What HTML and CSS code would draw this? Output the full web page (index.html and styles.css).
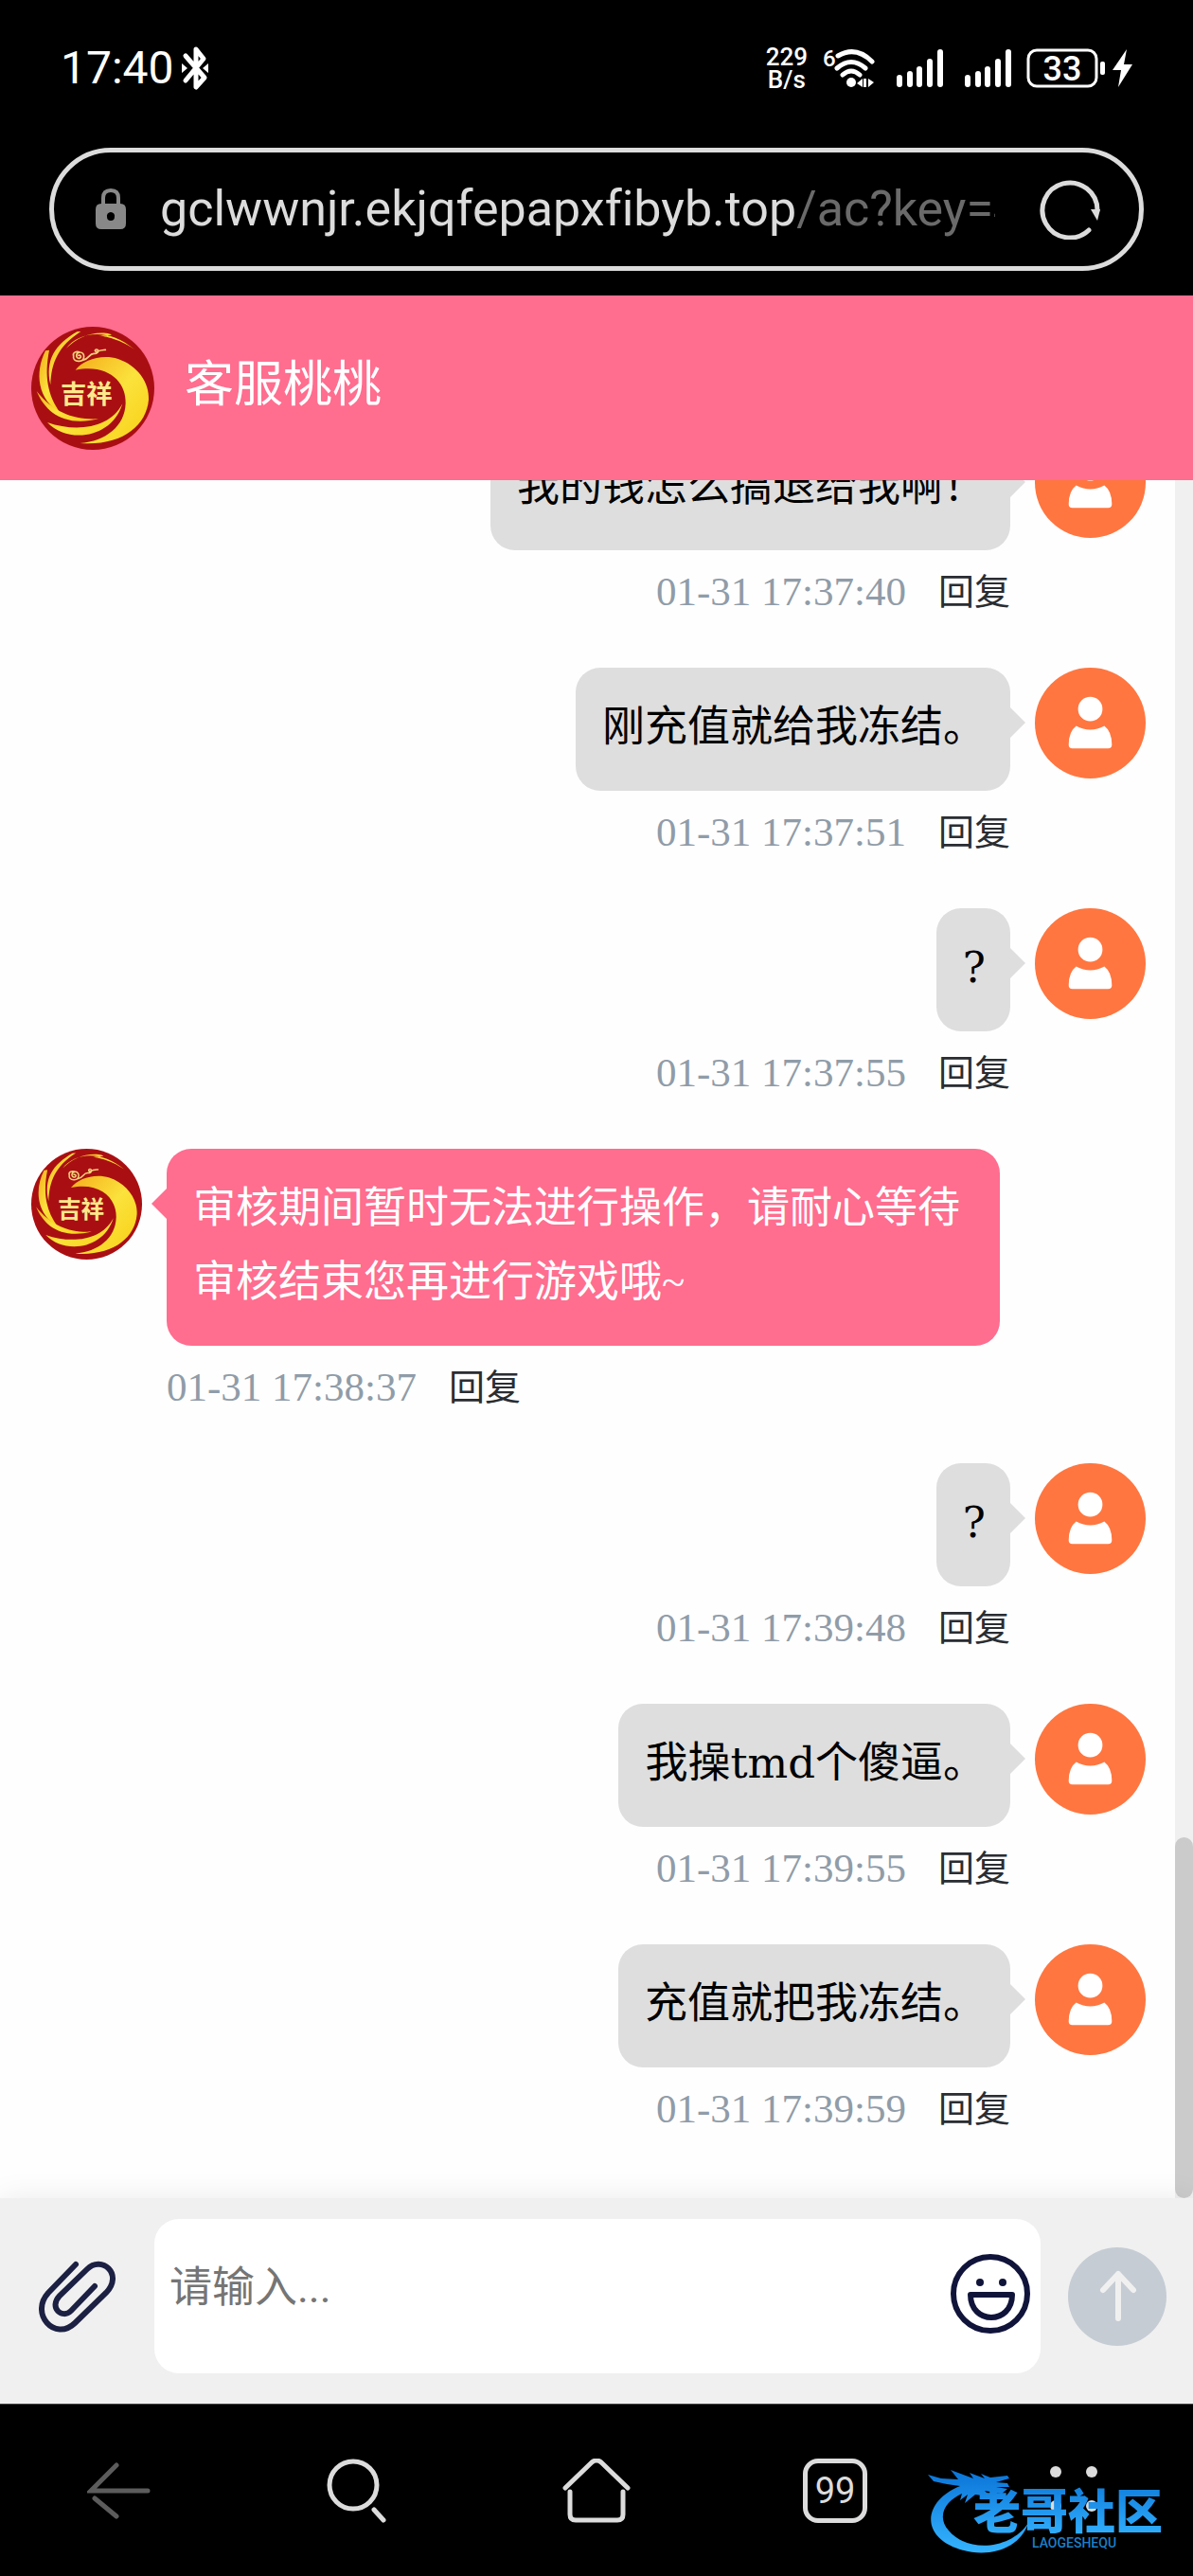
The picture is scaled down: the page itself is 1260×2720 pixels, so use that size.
FILE: index.html
```
<!DOCTYPE html>
<html lang="zh-CN">

<head>
    <meta charset="UTF-8">
    <meta name="viewport" content="width=device-width, initial-scale=1.0">
    <title>客服桃桃</title>
    <link rel="stylesheet" href="styles.css">
</head>

<body>

    <!-- Shared icons -->
    <svg class="sprite" aria-hidden="true">
        <symbol id="logo" viewBox="15 14 390 390">
            <defs>
                <linearGradient id="gold" x1="0" y1="0" x2="1" y2="1">
                    <stop offset="0" stop-color="#f5ad1c" />
                    <stop offset="0.5" stop-color="#fbe23c" />
                    <stop offset="1" stop-color="#f8cf14" />
                </linearGradient>
            </defs>
            <circle cx="210" cy="209" r="195" fill="#a90f12" />
            <g fill="url(#gold)">
                <path d="M155 151C180 118 240 100 290 116C350 136 390 190 387 245C380 330 300 392 170 383C250 376 312 330 314 256C316 190 260 130 155 151Z" />
                <path d="M160 30C90 70 58 120 76 198C78 130 100 75 172 29Z" />
                <path d="M60 90C25 160 35 245 108 288C66 230 56 170 72 88Z" />
                <path d="M126 82C165 30 260 15 342 86C290 48 235 44 232 42C265 42 285 40 252 34C200 30 160 50 126 82Z" />
                <path d="M32 218C60 285 120 332 228 306C150 310 85 285 32 218Z" />
                <path d="M66 317C130 385 270 370 304 258C265 335 160 350 66 317Z" />
            </g>
            <g fill="none" stroke="#f6d27c" stroke-width="5" stroke-linecap="round">
                <path d="M165 105c8-3 10 8 2 9c-12 1-12-18 2-19c17-1 18 27-2 28c-15 1-20-8-18-16c-4-12 10-17 20-12M178 120c20-2 20-22 36-21c16 1 16-14 7-13c-8 2-2 10 5 6c6-4 14-4 24-5" />
            </g>
            <text x="108" y="258" font-size="82" font-weight="700" fill="#ffe88a" class="logo-text">吉祥</text>
        </symbol>
        <symbol id="user" viewBox="0 0 118 118">
            <circle cx="59" cy="59" r="59" fill="#ff7640" />
            <circle cx="59" cy="44" r="13" fill="#fff" />
            <path d="M44 62Q59 70 74 62Q82 68 82 82Q82 86 78 86H40Q36 86 36 82Q36 68 44 62Z" fill="#fff" />
        </symbol>
        <symbol id="signal" viewBox="0 0 56 42">
            <g stroke="#fff" stroke-width="6" stroke-linecap="round">
                <path d="M10 31v7M21 27v11M31 22v16M42 14v24M53 4v34" />
            </g>
        </symbol>
    </svg>

    <header class="browser-top">
        <div class="status-bar">
            <div class="status-left">
                <span class="clock">17:40</span>
                <svg width="28" height="48" viewBox="0 0 28 48">
                    <g fill="none" stroke="#fff" stroke-width="5" stroke-linejoin="round" stroke-linecap="round">
                        <path d="M4 11L24 34L15 44V4L23 14L4 37" />
                    </g>
                    <path d="M0 19l6 5l-6 5zM28 19l-6 5l6 5z" fill="#fff" />
                </svg>
            </div>
            <div class="status-right">
                <div class="speed">229<br>B/s</div>
                <svg width="55" height="42" viewBox="0 0 55 42">
                    <text x="0" y="19" font-size="24" fill="#fff" class="ui-text">6</text>
                    <g fill="none" stroke="#fff" stroke-width="5" stroke-linecap="round">
                        <path d="M16 8Q35-3 52 14M15 21Q30 8 45 21M21 28Q30 20 39 28" />
                    </g>
                    <circle cx="30" cy="36" r="5" fill="#fff" />
                    <path d="M42 32v9l-6-4zM46 32v9h-3v-9zM48 32l6 4l-6 5z" fill="#fff" />
                </svg>
                <svg width="56" height="42"><use href="#signal" /></svg>
                <svg width="56" height="42"><use href="#signal" /></svg>
                <svg width="112" height="42" viewBox="0 0 112 42">
                    <rect x="2" y="2" width="72" height="38" rx="9" fill="none" stroke="#fff" stroke-width="3" />
                    <rect x="78" y="14" width="5" height="14" rx="2" fill="#fff" />
                    <text x="38" y="34" font-size="36" fill="#fff" text-anchor="middle" class="ui-text">33</text>
                    <path d="M106 1L91 23H100L97 41L112 17H103Z" fill="#fff" />
                </svg>
            </div>
        </div>

        <div class="address-bar">
            <svg width="32" height="44" viewBox="0 0 32 44">
                <path d="M8 18V10Q8 2 16 2T24 10V18" fill="none" stroke="#888" stroke-width="4" />
                <path fill-rule="evenodd" d="M6 16H26Q32 16 32 22V37Q32 43 26 43H6Q0 43 0 37V22Q0 16 6 16ZM16 25a4 4 0 0 0-4 5a4 4 0 0 0 8 0a4 4 0 0 0-4-5Z" fill="#888" />
            </svg>
            <div class="url"><span class="domain">gclwwnjr.ekjqfepapxfibyb.top</span>/ac?key=4</div>
            <button class="icon-btn" type="button" aria-label="刷新">
                <svg width="64" height="64" viewBox="0 0 64 64">
                    <path d="M52 54A29 29 0 1 1 61 33" fill="none" stroke="#dcdcdc" stroke-width="5" stroke-linecap="round" />
                    <path d="M54 32H64L61 44Z" fill="#dcdcdc" />
                </svg>
            </button>
        </div>
    </header>

    <div class="chat-header">
        <svg class="header-avatar"><use href="#logo" /></svg>
        <h1>客服桃桃</h1>
    </div>

    <main class="chat">
        <div class="messages">
            <div class="message user">
                <svg class="avatar"><use href="#user" /></svg>
                <div class="content">
                    <p class="bubble">我的钱怎么搞退给我啊！</p>
                    <div class="meta"><time>01-31 17:37:40</time><button type="button">回复</button></div>
                </div>
            </div>

            <div class="message user">
                <svg class="avatar"><use href="#user" /></svg>
                <div class="content">
                    <p class="bubble">刚充值就给我冻结。</p>
                    <div class="meta"><time>01-31 17:37:51</time><button type="button">回复</button></div>
                </div>
            </div>

            <div class="message user">
                <svg class="avatar"><use href="#user" /></svg>
                <div class="content">
                    <p class="bubble">?</p>
                    <div class="meta"><time>01-31 17:37:55</time><button type="button">回复</button></div>
                </div>
            </div>

            <div class="message agent">
                <svg class="avatar"><use href="#logo" /></svg>
                <div class="content">
                    <p class="bubble">审核期间暂时无法进行操作，请耐心等待审核结束您再进行游戏哦~</p>
                    <div class="meta"><time>01-31 17:38:37</time><button type="button">回复</button></div>
                </div>
            </div>

            <div class="message user">
                <svg class="avatar"><use href="#user" /></svg>
                <div class="content">
                    <p class="bubble">?</p>
                    <div class="meta"><time>01-31 17:39:48</time><button type="button">回复</button></div>
                </div>
            </div>

            <div class="message user">
                <svg class="avatar"><use href="#user" /></svg>
                <div class="content">
                    <p class="bubble">我操tmd个傻逼。</p>
                    <div class="meta"><time>01-31 17:39:55</time><button type="button">回复</button></div>
                </div>
            </div>

            <div class="message user">
                <svg class="avatar"><use href="#user" /></svg>
                <div class="content">
                    <p class="bubble">充值就把我冻结。</p>
                    <div class="meta"><time>01-31 17:39:59</time><button type="button">回复</button></div>
                </div>
            </div>
        </div>
        <div class="scrollbar"><div class="thumb"></div></div>
    </main>

    <form class="composer">
        <button class="icon-btn" type="button" aria-label="附件">
            <svg width="82" height="76" viewBox="0 0 82 76">
                <path d="M39 4L10 34C-10 56 17 86 38 66L71 34C90 14 66-6 51 9L22 37C10 50 25 62 34 53L59 27" fill="none" stroke="#1c2143" stroke-width="6" stroke-linecap="round" />
            </svg>
        </button>
        <div class="input-box">
            <textarea rows="1" placeholder="请输入..." aria-label="请输入"></textarea>
            <button class="icon-btn" type="button" aria-label="表情">
                <svg width="84" height="84" viewBox="0 0 84 84">
                    <g fill="none" stroke="#11143a" stroke-width="6" stroke-linejoin="round">
                        <circle cx="42" cy="42" r="39" />
                        <path d="M21 43H65C65 75 21 75 21 43Z" />
                    </g>
                    <circle cx="31" cy="30" r="4" fill="#11143a" />
                    <circle cx="55" cy="30" r="4" fill="#11143a" />
                </svg>
            </button>
        </div>
        <button class="icon-btn" type="submit" aria-label="发送">
            <svg width="104" height="104" viewBox="0 0 104 104">
                <circle cx="52" cy="52" r="52" fill="#c5ccd4" />
                <path d="M53 75V28M37 45L53 28L69 45" fill="none" stroke="#f0f0f0" stroke-width="6" stroke-linecap="round" stroke-linejoin="round" />
            </svg>
        </button>
    </form>

    <nav class="browser-nav">
        <button class="icon-btn" type="button" aria-label="后退">
            <svg width="68" height="68" viewBox="0 0 68 68" fill="none" stroke="#5c5c5c" stroke-width="5" stroke-linecap="round">
                <path d="M64 34H4L31 7M8 42L31 61" />
            </svg>
        </button>
        <button class="icon-btn" type="button" aria-label="搜索">
            <svg width="68" height="68" viewBox="0 0 68 68" fill="none" stroke="#dcdcdc" stroke-width="5" stroke-linecap="round">
                <circle cx="29" cy="28" r="25" />
                <path d="M51 54L61 65" />
            </svg>
        </button>
        <button class="icon-btn" type="button" aria-label="主页">
            <svg width="72" height="68" viewBox="0 0 72 68" fill="none" stroke="#dcdcdc" stroke-width="5" stroke-linecap="round" stroke-linejoin="round">
                <path d="M3 31L31 4Q36 0 41 4L69 31M8 35V59Q8 65 14 65H58Q64 65 64 59V35" />
            </svg>
        </button>
        <button class="tabs-btn" type="button">99</button>
        <button class="icon-btn" type="button" aria-label="菜单">
            <svg width="68" height="68" viewBox="0 0 68 68" fill="#dcdcdc">
                <circle cx="15" cy="14" r="6" />
                <circle cx="53" cy="14" r="6" />
                <circle cx="15" cy="50" r="6" />
                <circle cx="53" cy="50" r="6" />
            </svg>
        </button>

        <div class="watermark">
            <svg width="262" height="96" viewBox="0 0 262 96">
                <defs>
                    <linearGradient id="blue" x1="0" y1="0" x2="0" y2="1">
                        <stop offset="0" stop-color="#0a74d8" />
                        <stop offset="1" stop-color="#35b4ff" />
                    </linearGradient>
                </defs>
                <g fill="url(#blue)">
                    <path d="M34 23C-4 38-10 76 34 90C66 100 98 88 106 62C88 90 42 94 22 70C8 54 20 38 36 31L34 38L42 32L39 41L50 32L66 34L60 28L72 30L78 31L84 26L72 24H86L84 20L72 19L86 15L84 12L66 14L56 10L60 15L44 9L48 15L24 6L32 16L14 15L0 11L6 18L20 21Z" />
                    <text x="48" y="68" font-size="50" font-weight="900" class="logo-text">老哥社区</text>
                </g>
                <text x="110" y="88" font-size="14" fill="#1d7fc8" class="ui-text">LAOGESHEQU</text>
            </svg>
        </div>
    </nav>

</body>

</html>
```

FILE: styles.css
```
* {
    box-sizing: border-box;
}

body {
    display: flex;
    flex-direction: column;
    height: 100vh;
    margin: 0;
    background-color: #000;
    font-family: 'Liberation Serif', 'Noto Sans CJK SC', serif;
}

button {
    padding: 0;
    border: none;
    background: none;
    font-family: inherit;
}

svg {
    display: block;
    flex-shrink: 0;
}

.sprite {
    position: absolute;
    width: 0;
    height: 0;
}

.ui-text {
    font-family: Roboto, sans-serif;
    font-weight: 500;
}

.logo-text {
    font-family: 'Noto Sans CJK SC', sans-serif;
}

/* Phone status bar and address bar */
.browser-top {
    padding-bottom: 26px;
    color: #fff;
    font-family: Roboto, sans-serif;
}

.status-bar {
    display: flex;
    justify-content: space-between;
    align-items: center;
    padding: 44px 64px 56px;
}

.status-left,
.status-right {
    display: flex;
    align-items: center;
}

.status-left {
    gap: 8px;
}

.status-right {
    gap: 16px;
}

.clock {
    font-size: 48px;
    line-height: 56px;
}

.speed {
    font-size: 26px;
    font-weight: 500;
    line-height: 24px;
    text-align: center;
}

.address-bar {
    display: flex;
    align-items: center;
    height: 130px;
    margin: 0 52px;
    padding: 0 41px 0 44px;
    border: 5px solid #dcdcdc;
    border-radius: 65px;
}

.url {
    flex: 1;
    margin: 0 47px 0 36px;
    overflow: hidden;
    white-space: nowrap;
    font-size: 52px;
    font-variant-ligatures: none;
    line-height: 72px;
    color: #6a6a6a;
}

.domain {
    color: #dcdcdc;
}

/* Chat */
.chat-header {
    display: flex;
    align-items: center;
    gap: 32px;
    height: 195px;
    padding: 0 33px;
    background-color: #ff6d8f;
    color: #fff;
}

.header-avatar {
    width: 130px;
    height: 130px;
}

.chat-header h1 {
    margin: 0;
    padding-bottom: 16px;
    font-size: 52px;
    font-weight: 400;
}

.chat {
    display: flex;
    flex: 1;
    min-height: 0;
    overflow: hidden;
    background-color: #fefefe;
}

.messages {
    display: flex;
    flex: 1;
    flex-direction: column;
    justify-content: flex-end;
    padding: 0 31px 14px 33px;
}

.message {
    display: flex;
    flex-shrink: 0;
    gap: 26px;
}

.message.user {
    flex-direction: row-reverse;
}

.avatar {
    width: 117px;
    height: 117px;
}

.content {
    display: flex;
    flex-direction: column;
    align-items: flex-start;
}

.user .content {
    align-items: flex-end;
}

.bubble {
    position: relative;
    min-width: 75px;
    max-width: 880px;
    margin: 0;
    padding: 24px 28px 28px;
    border-radius: 26px;
    font-size: 45px;
    line-height: 78px;
    background-color: #dedede;
    color: #000;
}

.bubble::after {
    content: '';
    position: absolute;
    top: 42px;
    left: 100%;
    border: 16px solid transparent;
    border-right-width: 0;
    border-left-color: #dedede;
}

.user .bubble {
    padding: 24px 26px 28px 28px;
    font-family: 'DejaVu Serif', 'Noto Sans CJK SC', serif;
}

.agent .bubble {
    background-color: #ff6d8f;
    color: #fff;
}

.agent .bubble::after {
    right: 100%;
    left: auto;
    border: 16px solid transparent;
    border-left-width: 0;
    border-right-color: #ff6d8f;
}

.meta {
    display: flex;
    align-items: center;
    gap: 34px;
    height: 86px;
    margin-bottom: 38px;
}

.meta time {
    font-size: 43px;
    color: #909ca8;
}

.meta button {
    padding-bottom: 6px;
    font-size: 38px;
    color: #2a2d32;
}

.scrollbar {
    display: flex;
    flex-direction: column;
    justify-content: flex-end;
    width: 19px;
    background-color: #f0f0f0;
}

.thumb {
    height: 21%;
    border-radius: 10px;
    background-color: #cbcbcb;
}

/* Message composer */
.composer {
    display: flex;
    align-items: center;
    padding: 22px 28px 32px 41px;
    background-color: #f0f0f0;
    box-shadow: 0 0 30px rgba(0, 0, 0, 0.08);
}

.input-box {
    display: flex;
    flex: 1;
    align-items: center;
    height: 163px;
    margin: 0 29px 0 40px;
    padding-right: 11px;
    border-radius: 26px;
    background-color: #fff;
}

.input-box textarea {
    flex: 1;
    height: 100%;
    padding: 34px 16px;
    border: none;
    outline: none;
    resize: none;
    background: none;
    font-family: Roboto, 'Noto Sans CJK SC', sans-serif;
    font-size: 45px;
    line-height: 78px;
}

.input-box textarea::placeholder {
    color: #757575;
}

.input-box .icon-btn {
    padding-bottom: 6px;
}

/* Browser toolbar */
.browser-nav {
    position: relative;
    display: grid;
    grid-template-columns: repeat(5, 1fr);
    align-items: center;
    justify-items: center;
    height: 182px;
    border-top: 1px solid #444;
}

.tabs-btn {
    width: 68px;
    height: 68px;
    border: 5px solid #dcdcdc;
    border-radius: 16px;
    font-family: Roboto, sans-serif;
    font-size: 38px;
    color: #dcdcdc;
}

.watermark {
    position: absolute;
    right: 18px;
    bottom: 22px;
}
```
